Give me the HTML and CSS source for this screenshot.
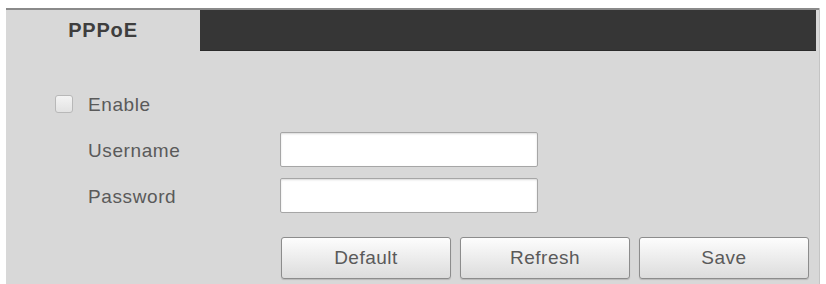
FILE: index.html
```html
<!DOCTYPE html>
<html>
<head>
<meta charset="utf-8">
<link rel="stylesheet" href="styles.css">
</head>
<body>
<div class="panel">
  <div class="header">
    <div class="tab">PPPoE</div>
    <div class="bar"></div>
  </div>
  <div class="content">
    <div class="enable-row">
      <span class="checkbox"></span>
      <span class="label">Enable</span>
    </div>
    <div class="fields">
      <div class="field">
        <span class="label">Username</span>
        <span class="input"></span>
      </div>
      <div class="field">
        <span class="label">Password</span>
        <span class="input"></span>
      </div>
    </div>
    <div class="buttons">
      <button class="btn">Default</button>
      <button class="btn">Refresh</button>
      <button class="btn">Save</button>
    </div>
  </div>
</div>
</body>
</html>
```
FILE: styles.css
```css
html, body {
  margin: 0;
  padding: 0;
  background: #ffffff;
}
body {
  padding: 8px 0 0 6px;
  font-family: "Liberation Sans", Arial, sans-serif;
}
.panel {
  width: 814px;
  height: 276px;
  background: #d8d8d8;
  border-right: 1px solid #c4c4c4;
  box-sizing: border-box;
  display: flex;
  flex-direction: column;
}
.header {
  display: flex;
  height: 43px;
  border-top: 2px solid #8a8a8a;
  box-sizing: border-box;
}
.tab {
  width: 194px;
  background: #d8d8d8;
  color: #3e3e3e;
  font-weight: bold;
  font-size: 20px;
  letter-spacing: 0.8px;
  display: flex;
  align-items: center;
  justify-content: center;
}
.bar {
  flex: 1;
  background: #363636;
  margin-right: 3px;
  border-bottom: 1px solid #2a2a2a;
}
.content {
  padding: 43px 0 0 49px;
  color: #5a5a5a;
}
.label {
  font-size: 19px;
  letter-spacing: 0.6px;
  color: #5a5a5a;
  padding-top: 2px;
}
.enable-row {
  display: flex;
  align-items: center;
  gap: 15px;
  height: 20px;
}
.checkbox {
  width: 16px;
  height: 16px;
  border: 1px solid #b8b8b8;
  border-radius: 3px;
  background: linear-gradient(#f4f4f4, #e2e2e2);
}
.fields {
  margin-top: 18px;
  margin-left: 33px;
  display: flex;
  flex-direction: column;
  gap: 11px;
}
.field {
  display: flex;
  align-items: center;
}
.field .label {
  width: 192px;
}
.input {
  width: 258px;
  height: 35px;
  box-sizing: border-box;
  background: #ffffff;
  border: 1px solid #a6a6a6;
  border-radius: 2px;
  box-shadow: inset 0 1px 2px rgba(0,0,0,0.15);
}
.buttons {
  margin-top: 24px;
  margin-left: 226px;
  display: flex;
  gap: 9px;
}
.btn {
  width: 170px;
  height: 42px;
  border: 1px solid #8c8c8c;
  border-radius: 3px;
  background: linear-gradient(#fdfdfd, #e9e9e9 60%, #dcdcdc);
  box-shadow: 0 1px 1px rgba(0,0,0,0.15);
  font-family: "Liberation Sans", Arial, sans-serif;
  font-size: 19px;
  letter-spacing: 0.5px;
  color: #5a5a5a;
  padding: 0;
}
```
